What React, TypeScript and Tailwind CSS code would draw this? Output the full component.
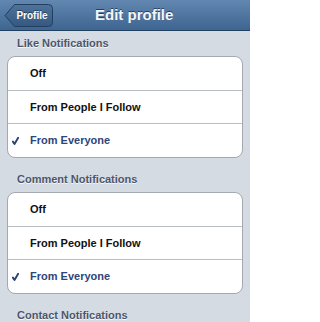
import React from "react";

const font = { fontFamily: '"Liberation Sans", Arial, Helvetica, sans-serif' };

function Check() {
  return (
    <svg width="7" height="8" viewBox="0 0 7 8" className="absolute left-[4px] top-1/2 -translate-y-1/2">
      <path d="M0.9 4.6 L2.5 7 L6.2 0.7" fill="none" stroke="#2c4271" strokeWidth="1.9" strokeLinecap="round" strokeLinejoin="round" />
    </svg>
  );
}

function Row({ label, selected, h, last }: { label: string; selected?: boolean; h: string; last?: boolean }) {
  return (
    <div
      className={`relative flex items-center pl-[22px] ${h} ${last ? "" : "border-b border-[#b9bec5]"} text-[11px] font-bold ${
        selected ? "text-[#2f4577]" : "text-[#111]"
      }`}
    >
      {selected && <Check />}
      <span>{label}</span>
    </div>
  );
}

function Section({ title, mt }: { title: string; mt: string }) {
  return (
    <div
      className={`${mt} h-[14px] leading-[14px] pl-[17px] text-[11px] font-bold text-[#4c566c]`}
      style={{ textShadow: "0 1px 0 rgba(255,255,255,0.8)" }}
    >
      {title}
    </div>
  );
}

function Card() {
  return (
    <div className="mx-[7px] mt-[6px] rounded-[8px] border border-[#a4a9b0] bg-white overflow-hidden">
      <Row label="Off" h="h-[34px]" />
      <Row label="From People I Follow" h="h-[33px]" />
      <Row label="From Everyone" h="h-[33px]" selected last />
    </div>
  );
}

export default function App() {
  return (
    <div className="w-[250px] h-[322px] overflow-hidden bg-[#d5dbe2]" style={font}>
      <div className="h-[31px] flex items-center bg-gradient-to-b from-[#6288b1] to-[#3e6590] border-b border-[#22405f]">
        <div className="relative ml-[4px] w-[49px] h-[23px] flex items-center justify-center">
          <svg width="49" height="23" viewBox="0 0 49 23" className="absolute inset-0">
            <defs>
              <linearGradient id="bb" x1="0" y1="0" x2="0" y2="1">
                <stop offset="0" stopColor="#4f739b" />
                <stop offset="1" stopColor="#34587f" />
              </linearGradient>
            </defs>
            <path
              d="M10.5 0.5 H44.5 Q48.5 0.5 48.5 4.5 V18.5 Q48.5 22.5 44.5 22.5 H10.5 L1 11.5 Z"
              fill="url(#bb)"
              stroke="#233f60"
              strokeWidth="1"
              strokeLinejoin="round"
            />
          </svg>
          <span
            className="relative pl-[7px] text-[10px] font-bold text-white"
            style={{ textShadow: "0 -1px 0 rgba(0,0,0,0.45)" }}
          >
            Profile
          </span>
        </div>
        <div
          className="ml-[42px] text-[15px] font-bold text-[#f4f6f9]"
          style={{ textShadow: "0 -1px 0 rgba(0,0,0,0.5)" }}
        >
          Edit profile
        </div>
      </div>
      <Section title="Like Notifications" mt="mt-[5px]" />
      <Card />
      <Section title="Comment Notifications" mt="mt-[14px]" />
      <Card />
      <Section title="Contact Notifications" mt="mt-[14px]" />
    </div>
  );
}
